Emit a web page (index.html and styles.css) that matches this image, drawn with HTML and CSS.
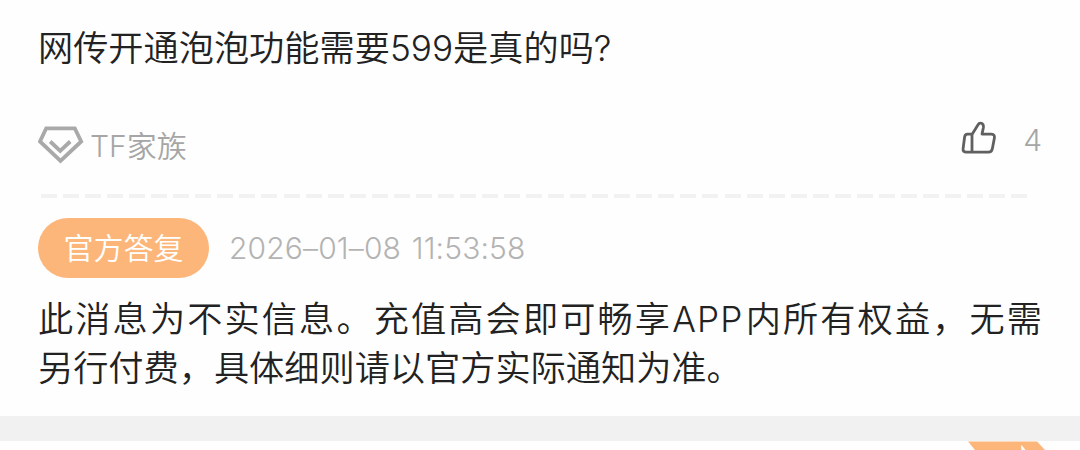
FILE: index.html
```
<!DOCTYPE html>
<html lang="zh-CN">
<head>
  <meta charset="UTF-8" />
  <meta name="viewport" content="width=device-width, initial-scale=1.0" />
  <title>官方答复</title>
  <link rel="stylesheet" href="styles.css">
</head>

<body>
  <article class="card">
    <h1 class="question">网传开通泡泡功能需要<span class="num">599</span>是真的吗?</h1>

    <div class="meta">
      <div class="topic">
        <svg class="gem" width="46" height="40" viewBox="0 0 46 40" fill="none" stroke="#a9a9a9">
          <path d="M8.2 3.3H36.8L43.2 16.5L22.5 36L2 16.5Z" stroke-width="3.8" />
          <path d="M12.2 16.5L22.2 26L32.2 16.5" stroke-width="3.8" />
        </svg>
        <span class="topic-name"><span class="num">TF</span>家族</span>
      </div>
      <div class="likes">
        <svg class="thumb" width="36" height="36" viewBox="0 0 36 36" fill="none" stroke="#606060" stroke-width="2.8" stroke-linejoin="round" stroke-linecap="round">
          <path d="M11 14.5L17.2 4.6C18.3 2.2 23 2.5 22.4 7.5L21 14.1H30.5C33 14.1 33.8 15.8 33.4 18L31.4 28.5C30.9 31 29.8 32.2 27.5 32.2H5.2C3 32.2 1.8 30.8 2.1 28.7L3.6 17C3.9 15 4.8 14.1 6.5 14.1H11V32" />
        </svg>
        <span class="count">4</span>
      </div>
    </div>

    <div class="divider"></div>

    <div class="reply-head">
      <span class="tag">官方答复</span>
      <time class="date">2026–01–08 11:53:58</time>
    </div>
    <p class="answer">此消息为不实信息。充值高会即可畅享<span class="latin">APP</span>内所有权益，无需<span class="keep">另行付费</span>，具体细则请以官方实际通知为准。</p>
  </article>

  <section class="next-card">
    <svg class="ribbon" width="80" height="9" viewBox="0 0 80 9">
      <path d="M0 0.5H69L77 9H7Z" fill="#fdb67a" />
      <path d="M53 4.5L54 4.5L57.5 9H53.5Z" fill="#fff" />
    </svg>
  </section>
</body>
</html>
```

FILE: styles.css
```
body {
  margin: 0;
  height: 450px;
  overflow: hidden;
  background-color: #f1f1f1;
  font-family: Inter, "Noto Sans CJK SC", sans-serif;
  font-weight: 300;
  color: #222;
}

.card {
  box-sizing: border-box;
  height: 416px;
  padding: 22px 38px 0;
  background-color: #fefefe;
}

.question {
  margin: 0;
  font-size: 35.2px;
  font-weight: 350;
  line-height: 52px;
}

.num {
  font-weight: 300;
}

.meta {
  display: flex;
  justify-content: space-between;
  margin-top: 44px;
  height: 50px;
  color: #a6a6a6;
}

.topic {
  display: flex;
  align-items: center;
  gap: 6px;
  height: 54px;
  font-size: 30px;
}

.topic-name {
  font-weight: 350;
  line-height: 46px;
  padding-top: 1px;
}

.likes {
  display: flex;
  align-items: center;
  gap: 26px;
  height: 40px;
  font-size: 30px;
}

.count {
  padding-top: 4px;
}

.divider {
  height: 4px;
  margin: 26px 14px 0 3px;
  background: repeating-linear-gradient(90deg, #f2f2f2 0 16px, transparent 16px 22.05px);
}

.reply-head {
  display: flex;
  align-items: center;
  gap: 20px;
  margin-top: 20px;
  height: 60px;
}

.tag {
  width: 171px;
  border-radius: 30px;
  background-color: #fdb67a;
  color: #fff;
  font-size: 30px;
  font-weight: 350;
  line-height: 60px;
  text-align: center;
}

.date {
  color: #b3b3b3;
  font-size: 30px;
  letter-spacing: 0.15px;
  word-spacing: 2px;
}

.answer {
  margin: 17px 0 0;
  font-size: 35.2px;
  font-weight: 350;
  line-height: 49px;
  text-align: justify;
}

.latin {
  font-weight: 300;
  letter-spacing: 1.2px;
}

.keep {
  white-space: nowrap;
}

.next-card {
  display: flex;
  justify-content: flex-end;
  margin-top: 25px;
  height: 9px;
  padding-right: 32px;
  background-color: #fefefe;
}
```
